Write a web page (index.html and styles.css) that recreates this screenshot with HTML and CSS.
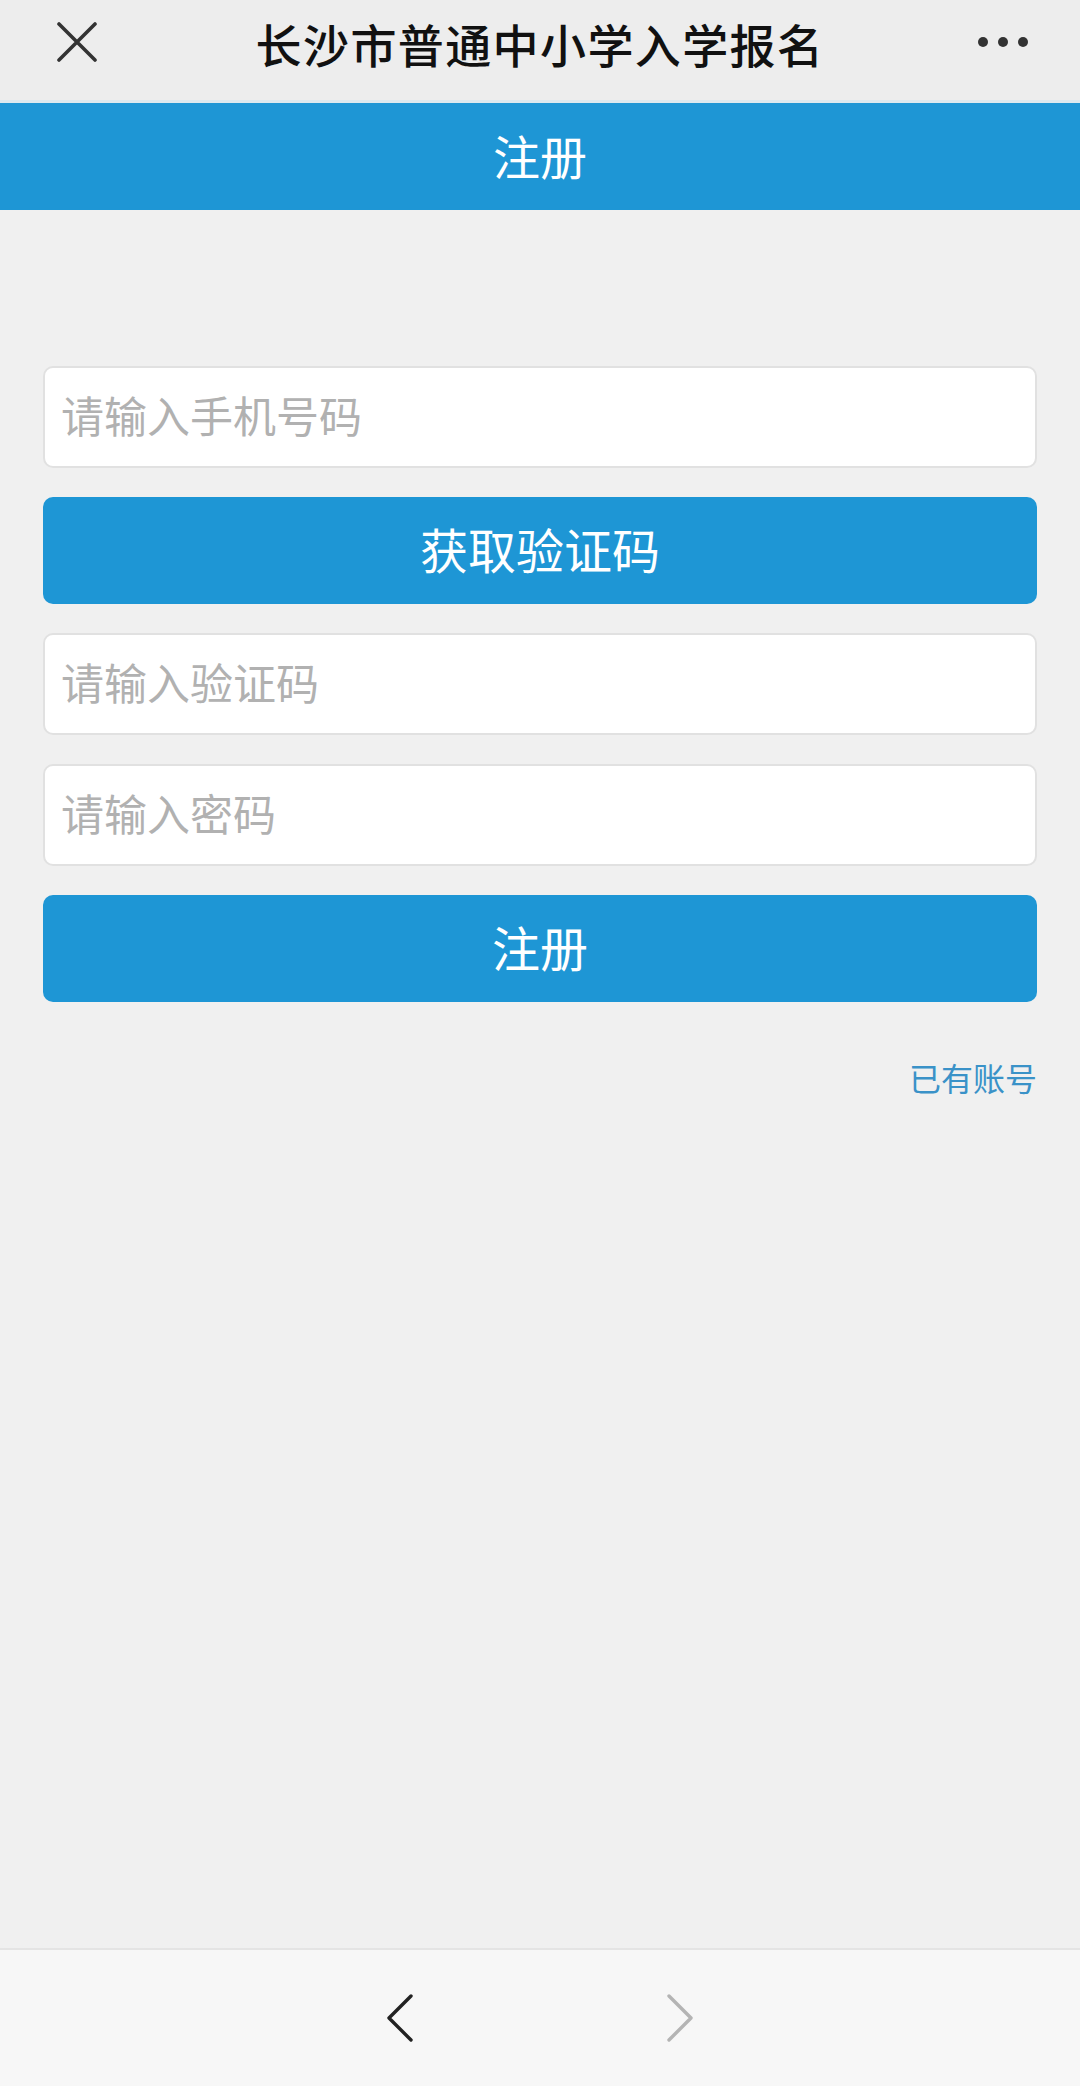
FILE: index.html
```html
<!DOCTYPE html>
<html lang="zh-CN">

<head>
    <meta charset="UTF-8" />
    <meta name="viewport" content="width=device-width, initial-scale=1.0" />
    <title>长沙市普通中小学入学报名</title>
    <link rel="stylesheet" href="styles.css">
</head>

<body>
    <!-- WeChat top bar -->
    <div class="topbar">
        <div class="topbar-btn">
            <svg width="40" height="40" viewBox="0 0 40 40">
                <path d="M2 2 L38 38 M38 2 L2 38" stroke="#333" stroke-width="3.6" stroke-linecap="round" fill="none" />
            </svg>
        </div>
        <div class="topbar-title">长沙市普通中小学入学报名</div>
        <div class="topbar-btn">
            <span class="dot"></span><span class="dot"></span><span class="dot"></span>
        </div>
    </div>

    <!-- Page header -->
    <div class="page-header">注册</div>

    <!-- Register form -->
    <div class="form">
        <input type="text" class="field" placeholder="请输入手机号码" />
        <button class="btn">获取验证码</button>
        <input type="text" class="field" placeholder="请输入验证码" />
        <input type="password" class="field" placeholder="请输入密码" />
        <button class="btn">注册</button>
        <div class="links">
            <a href="#">已有账号</a>
        </div>
    </div>

    <!-- Bottom navigation -->
    <div class="bottombar">
        <svg width="30" height="50" viewBox="0 0 30 50">
            <path d="M26 3 L4 25 L26 47" stroke="#222" stroke-width="3.4" stroke-linecap="round" stroke-linejoin="round" fill="none" />
        </svg>
        <svg width="30" height="50" viewBox="0 0 30 50">
            <path d="M4 3 L26 25 L4 47" stroke="#b4b4b4" stroke-width="3.4" stroke-linecap="round" stroke-linejoin="round" fill="none" />
        </svg>
    </div>
</body>

</html>
```

FILE: styles.css
```css
* {
    box-sizing: border-box;
}

body {
    font-family: "Noto Sans CJK SC", "Noto Sans", sans-serif;
    margin: 0;
    padding: 0;
    background-color: #f0f0f0;
    min-height: 100vh;
    display: flex;
    flex-direction: column;
}

.topbar {
    height: 103px;
    background-color: #ededed;
    border-bottom: 3px solid #dce9ef;
    display: grid;
    grid-template-columns: 154px 1fr 154px;
    align-items: center;
}

.topbar-btn {
    display: flex;
    justify-content: center;
    align-items: center;
    gap: 10px;
    padding-bottom: 16px;
}

.topbar-title {
    text-align: center;
    font-size: 46px;
    font-weight: 500;
    letter-spacing: 1.4px;
    color: #111;
    padding-bottom: 14px;
}

.dot {
    width: 10px;
    height: 10px;
    border-radius: 50%;
    background-color: #333;
}

.page-header {
    height: 107px;
    background-color: #1e96d5;
    color: #fff;
    font-size: 47px;
    display: flex;
    justify-content: center;
    align-items: center;
    padding-bottom: 4px;
}

.form {
    flex: 1;
    padding: 156px 43px 0;
    display: flex;
    flex-direction: column;
    gap: 29px;
}

.field {
    height: 102px;
    border: 2px solid #e1e1e1;
    border-radius: 10px;
    background-color: #fff;
    padding: 0 16px 6px;
    font-family: inherit;
    font-size: 43px;
    color: #333;
    outline: none;
}

.field::placeholder {
    color: #b1b1b1;
}

.btn {
    height: 107px;
    border: none;
    border-radius: 10px;
    background-color: #1e96d5;
    color: #fff;
    font-family: inherit;
    font-size: 48px;
    padding-bottom: 6px;
    cursor: pointer;
}

.links {
    margin-top: 23px;
    text-align: right;
}

.links a {
    font-size: 32px;
    color: #3a92c8;
    text-decoration: none;
}

.bottombar {
    height: 138px;
    background-color: #f7f7f7;
    border-top: 2px solid #e4e4e4;
    display: flex;
    justify-content: center;
    align-items: center;
    gap: 250px;
}
```
